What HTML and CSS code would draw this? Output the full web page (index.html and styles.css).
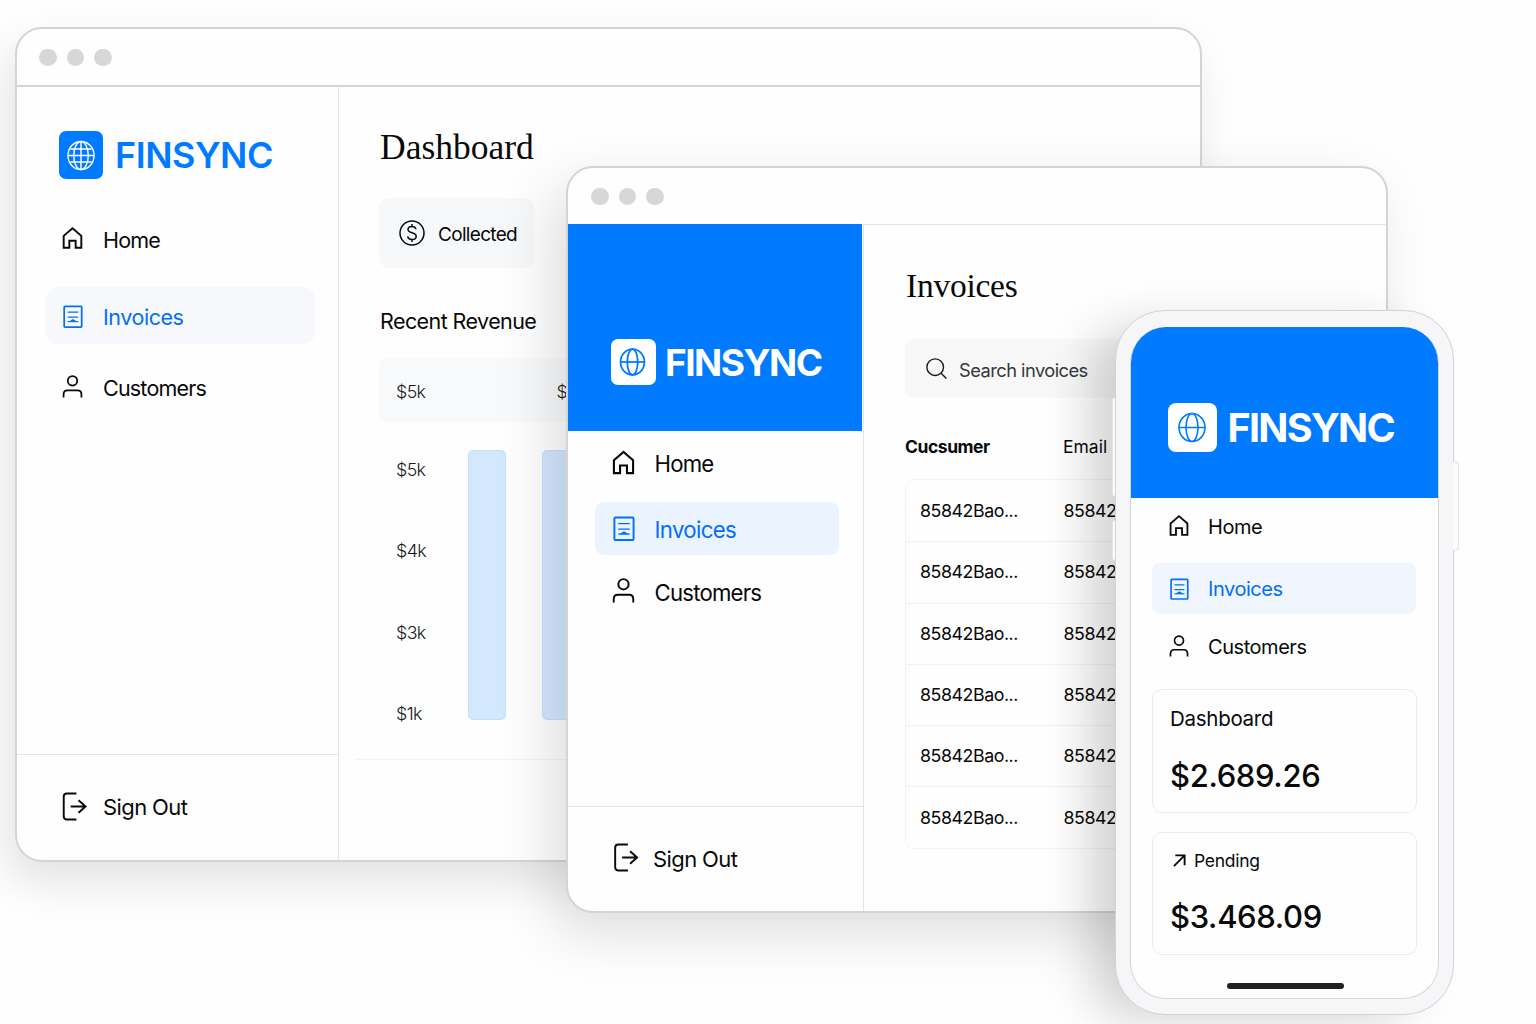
FILE: index.html
```html
<!DOCTYPE html>
<html lang="en">
<head>
<meta charset="utf-8">
<title>Finsync</title>
<link rel="stylesheet" href="styles.css">
</head>
<body>
<svg class="defs" aria-hidden="true">
  <symbol id="home" viewBox="0 0 24 24"><path d="M2.800 9.800 12 1.800l9.200 8v12.400h-5.900v-7.400H8.700v7.400H2.800z"/></symbol>
  <symbol id="invoice" viewBox="0 0 24 26"><rect x="2.500" y="1.500" width="20" height="23.500" rx="1"/><path class="thin" d="M6.500 8h12M6.500 13.700h12"/><path class="thin" d="M6.500 18.800h12"/><path class="solid" d="M7.500 19l5-3.200 5 3.200z"/></symbol>
  <symbol id="user" viewBox="0 0 24 26"><circle cx="12" cy="6.500" r="5.400"/><path d="M1.800 25.500v-3.400c0-2.800 1.700-4.600 4.400-4.600h11.600c2.700 0 4.400 1.800 4.400 4.600v3.400"/></symbol>
  <symbol id="out" viewBox="0 0 26 30"><path d="M15 1.500H5.200c-2 0-3.400 1.300-3.400 3.300v20.400c0 2 1.400 3.300 3.400 3.300H15M9 15h15.800M17.200 8.500l7.300 6.500-7.300 6.500"/></symbol>
</svg>

<section class="window desktop">
  <header class="titlebar"><i></i><i></i><i></i></header>
  <div class="body">
    <aside class="sidebar">
      <div class="brand">
        <span class="mark"><svg viewBox="0 0 30 32"><ellipse cx="15" cy="16" rx="14" ry="15"/><ellipse cx="15" cy="16" rx="7.800" ry="15"/><path d="M15 1v30M1 16h28M3.600 9h22.800M3.600 23h22.800"/></svg></span>
        <span class="name">FINSYNC</span>
      </div>
      <nav>
        <a class="item"><svg class="home"><use href="#home"/></svg><span>Home</span></a>
        <a class="item active"><svg class="inv"><use href="#invoice"/></svg><span>Invoices</span></a>
        <a class="item"><svg class="user"><use href="#user"/></svg><span>Customers</span></a>
      </nav>
      <a class="signout"><svg class="out"><use href="#out"/></svg><span>Sign Out</span></a>
    </aside>
    <main class="main">
      <h1>Dashboard</h1>
      <div class="collected"><svg viewBox="0 0 26 26"><circle cx="13" cy="13" r="12"/><path d="M17 9.200C16.600 7.400 15.200 6.400 13 6.400c-2.400 0-4 1.200-4 3.100 0 4.400 8.200 2 8.200 6.700 0 2.100-1.700 3.300-4.200 3.300-2.500 0-4-1.100-4.300-3.100M13 4v2.400M13 19.500V22"/></svg><span>Collected</span></div>
      <h2>Recent Revenue</h2>
      <div class="strip"><span>$5k</span><span>$4k</span></div>
      <div class="chart">
        <div class="axis"><span>$5k</span><span>$4k</span><span>$3k</span><span>$1k</span></div>
        <div class="bars"><b></b><b></b></div>
      </div>
      <hr>
    </main>
  </div>
</section>

<section class="window tablet">
  <header class="titlebar"><i></i><i></i><i></i></header>
  <div class="body">
    <aside class="sidebar">
      <div class="brand">
        <span class="mark"><svg viewBox="0 0 28 30"><ellipse cx="14" cy="15" rx="12.800" ry="13.800"/><ellipse cx="14" cy="15" rx="5.600" ry="13.800"/><path d="M1.200 15h25.600"/></svg></span>
        <span class="name">FINSYNC</span>
      </div>
      <nav>
        <a class="item"><svg class="home"><use href="#home"/></svg><span>Home</span></a>
        <a class="item active"><svg class="inv"><use href="#invoice"/></svg><span>Invoices</span></a>
        <a class="item"><svg class="user"><use href="#user"/></svg><span>Customers</span></a>
      </nav>
      <a class="signout"><svg class="out"><use href="#out"/></svg><span>Sign Out</span></a>
    </aside>
    <main class="main">
      <h1>Invoices</h1>
      <div class="search"><svg viewBox="0 0 24 24"><circle cx="10.500" cy="10.500" r="9.500"/><path d="m17.300 17.300 6 6"/></svg><span>Search invoices</span></div>
      <div class="thead"><strong>Cucsumer</strong><span>Email</span></div>
      <div class="rows">
        <div><span>85842Bao...</span><span>85842Bao...</span></div>
        <div><span>85842Bao...</span><span>85842Bao...</span></div>
        <div><span>85842Bao...</span><span>85842Bao...</span></div>
        <div><span>85842Bao...</span><span>85842Bao...</span></div>
        <div><span>85842Bao...</span><span>85842Bao...</span></div>
        <div><span>85842Bao...</span><span>85842Bao...</span></div>
      </div>
    </main>
  </div>
</section>

<section class="phone">
  <i class="key volume-up"></i><i class="key volume-down"></i><i class="key power"></i>
  <div class="screen">
    <div class="brand">
      <span class="mark"><svg viewBox="0 0 28 30"><ellipse cx="14" cy="15" rx="13" ry="14"/><ellipse cx="14" cy="15" rx="6" ry="14"/><path d="M1 15h26"/></svg></span>
      <span class="name">FINSYNC</span>
    </div>
    <nav>
      <a class="item"><svg class="home"><use href="#home"/></svg><span>Home</span></a>
      <a class="item active"><svg class="inv"><use href="#invoice"/></svg><span>Invoices</span></a>
      <a class="item"><svg class="user"><use href="#user"/></svg><span>Customers</span></a>
    </nav>
    <div class="card"><p class="label">Dashboard</p><p class="amount">$2.689.26</p></div>
    <div class="card pending"><p class="label"><svg viewBox="0 0 14 14"><path d="M1 13 12.500 1.500M2.500 1.500h10V12"/></svg>Pending</p><p class="amount">$3.468.09</p></div>
    <div class="grip"></div>
  </div>
</section>
</body>
</html>
```
FILE: styles.css
```css
* { box-sizing: border-box; margin: 0; padding: 0; }
body {
  position: relative;
  width: 1536px;
  height: 1024px;
  overflow: hidden;
  background: #fefefe;
  color: #08090a;
  font-family: Inter, "Liberation Sans", sans-serif;
}
.defs { position: absolute; width: 0; height: 0; }
svg { fill: none; stroke: currentColor; stroke-width: 2; flex: none; overflow: visible; }
.thin { stroke-width: 1.3; }
.solid { fill: currentColor; stroke: none; }

/* Window frames */
.window {
  position: absolute;
  display: flex;
  flex-direction: column;
  border: 2px solid #d3d4d5;
  background: #fefefe;
  overflow: hidden;
}
.desktop {
  left: 15px; top: 27px; width: 1187px; height: 835px;
  border-radius: 27px;
  box-shadow: -8px 20px 44px rgba(0, 0, 0, .11);
}
.tablet {
  left: 566px; top: 166px; width: 822px; height: 747px;
  border-radius: 27px;
  box-shadow: -14px 20px 56px rgba(0, 0, 0, .13);
}
.titlebar { display: flex; align-items: center; gap: 10px; flex: none; padding-top: 1px; }
.titlebar i { width: 17.500px; height: 17.500px; border-radius: 50%; background: #d7d7d7; }
.desktop .titlebar { height: 58px; padding-left: 22px; border-bottom: 2px solid #d3d4d5; }
.tablet .titlebar { height: 56px; padding-left: 23px; }
.body { display: flex; flex: 1; min-height: 0; }
.sidebar { display: flex; flex-direction: column; flex: none; border-right: 1px solid #e3e4e5; }
.desktop .sidebar { width: 322px; }
.tablet .sidebar { width: 296px; }

/* Brand */
.brand { display: flex; align-items: center; flex: none; }
.mark { display: flex; align-items: center; justify-content: center; flex: none; }
.name { white-space: nowrap; line-height: 1; }
.desktop .brand { height: 48px; margin: 44px 0 0 42px; gap: 12px; color: #007bff; }
.desktop .mark { width: 44px; height: 48px; border-radius: 7px; background: #007bff; color: #fff; }
.desktop .mark svg { width: 28px; height: 31px; stroke-width: 1.500; }
.desktop .name { font-size: 36px; font-weight: 600; letter-spacing: -.5px; }
.tablet .brand { width: 294px; height: 206.500px; padding: 70px 0 0 43px; gap: 9px; background: #007bff; color: #fff; }
.tablet .mark { width: 45px; height: 46px; padding-right: 2px; border-radius: 7px; background: #fff; color: #007bff; }
.tablet .mark svg { width: 27px; height: 28px; stroke-width: 1.900; }
.tablet .name { font-size: 37px; font-weight: 700; letter-spacing: -1.500px; }

/* Navigation */
nav { display: flex; flex-direction: column; }
.item, .signout { display: flex; align-items: center; white-space: nowrap; }
.item span { padding-top: 2px; }
.active { color: #036ef8; }
.desktop nav { margin: 31.500px 23px 0 29px; }
.desktop .item { height: 57px; padding-left: 16px; gap: 20px; font-size: 21.500px; letter-spacing: -.800px; border-radius: 12px; }
.desktop .item svg { width: 21px; height: 23px; margin-bottom: 2px; }
.desktop .item .home { width: 23px; height: 24px; margin: 0 -1px 3px -1px; }
.desktop .active { margin: 19px 0 15px; padding-top: 2px; background: #f6f8fb; letter-spacing: -.450px; }
.desktop .active svg { margin-bottom: 0; }
.signout { margin-top: auto; border-top: 1px solid #e5e6e7; font-size: 22px; letter-spacing: -.600px; }
.out { width: 25px; height: 29px; }
.desktop .signout { height: 106px; padding: 0 0 2px 45px; gap: 16px; }
.tablet nav { margin: 6px 24.500px 0 26.500px; }
.tablet .item { height: 53px; padding-left: 17px; gap: 20px; font-size: 22.200px; letter-spacing: -.800px; border-radius: 9px; }
.tablet .item svg { width: 23px; height: 25px; margin-bottom: 1px; }
.tablet .item .home { width: 25px; height: 27px; margin: 0 -1px 2px -1px; }
.tablet .item:first-child span { padding-top: 0; }
.tablet .active { margin: 12px 0 10px; padding-top: 1px; background: #ebf3fe; letter-spacing: -.650px; }
.tablet .signout { height: 105px; padding-left: 45px; gap: 14px; }
.tablet .out { width: 26px; margin-bottom: 4px; }

/* Dashboard window */
.main { display: flex; flex-direction: column; flex: 1; min-width: 0; }
h1 { font: 400 35.500px/40px "Liberation Serif", serif; padding-left: 1px; }
h2 { padding-left: 1px; font-size: 21.500px; font-weight: 400; line-height: 26px; letter-spacing: -.580px; }
.desktop .main { padding: 40px 0 0 40px; }
.collected {
  display: flex; align-items: center; gap: 13px;
  width: 155px; height: 70px; margin-top: 31px; padding-left: 20px;
  border-radius: 10px; background: #f7f8f9;
  font-size: 19px; letter-spacing: -.680px;
}
.collected svg { width: 26px; height: 26px; stroke-width: 1.500; }
.collected span { padding-top: 3px; }
.desktop h2 { margin-top: 40px; }
.strip {
  display: flex; align-items: center; gap: 131px;
  height: 64px; margin-top: 24px; padding: 3px 0 0 17px;
  border-radius: 8px 0 0 8px; background: #f8f9fa;
}
.strip, .axis { font-size: 17.800px; font-weight: 300; letter-spacing: -.600px; color: #18191b; }
.chart { display: flex; padding: 27.500px 0 0 17px; }
.axis { display: flex; flex-direction: column; justify-content: space-between; width: 72px; height: 276.500px; padding-top: 8px; line-height: 24px; }
.bars { display: flex; gap: 36px; }
.bars b { width: 37.500px; height: 270px; border: 1px solid #c5dffb; border-radius: 5px; background: #d3e7fd; }
hr { margin-top: 33px; margin-left: -24px; border: 0; border-top: 1px solid #f3f3f4; }

/* Invoices window */
.tablet .main { padding: 41px 0 0 41px; border-top: 1px solid #e5e6e7; }
.tablet h1 { font-size: 33.500px; letter-spacing: -.250px; }
.search {
  display: flex; align-items: center; gap: 12px;
  height: 59px; margin-top: 33px; padding-left: 21px;
  border-radius: 8px; background: #f8f8f9;
  font-size: 18.300px; letter-spacing: -.540px; color: #35373a;
}
.search svg { width: 21px; height: 21px; color: #191b1d; stroke-width: 1.600; }
.search span { padding-top: 2px; }
.thead { display: flex; align-items: center; height: 81px; padding-top: 16px; font-size: 17.500px; }
.thead strong { width: 158px; font-weight: 700; letter-spacing: -.450px; }
.rows { border: 1px solid #f1f2f3; border-right: 0; border-radius: 9px 0 0 9px; }
.rows div { display: flex; align-items: center; height: 61.300px; padding: 0 0 1px 14px; font-size: 17.800px; letter-spacing: -.440px; }
.rows div + div { border-top: 1px solid #f1f2f3; }
.rows span:first-child { width: 143.500px; }

/* Phone */
.phone {
  position: absolute; left: 1115px; top: 310px; width: 339px; height: 705px;
  padding: 16px 14px;
  border: 1.500px solid #d2d3d5; border-radius: 50px; background: #f6f6f8;
  box-shadow: -32px 10px 48px -8px rgba(0, 0, 0, .18);
}
.key { position: absolute; border: 1px solid #e2e3e5; background: #fbfbfc; }
.volume-up, .volume-down { left: -4px; width: 3px; border-right: 0; border-radius: 3px 0 0 3px; }
.volume-up { top: 86px; height: 100px; }
.volume-down { top: 209px; height: 41px; }
.power { right: -6px; top: 150px; width: 6px; height: 90px; border-left: 0; border-radius: 0 4px 4px 0; }
.screen {
  display: flex; flex-direction: column; height: 672px; overflow: hidden;
  border: 1px solid #d5d6d8; border-top: 0; border-radius: 36px; background: #fefefe;
}
.phone .brand { height: 171px; margin: 0 -1px; padding: 30px 0 0 38px; gap: 11px; background: #007bff; color: #fff; }
.phone .mark { width: 48.500px; height: 49px; border-radius: 8px; background: #fff; color: #007bff; }
.phone .mark svg { width: 28px; height: 31px; stroke-width: 1.600; }
.phone .name { padding-top: 2px; font-size: 39.500px; font-weight: 700; letter-spacing: -1.700px; }
.phone nav { margin: 3px 22px 0 21px; }
.phone .item { height: 51px; padding: 0 0 2px 17px; gap: 19px; font-size: 20px; letter-spacing: -.450px; border-radius: 8px; }
.phone .item svg { width: 20px; height: 22px; }
.phone .item .home { width: 22px; height: 23px; margin: 0 -1px 1px -1px; }
.phone .active { margin: 11px 0 7px; padding: 0 0 0 17px; background: #f0f5fe; }
.phone .active span { padding-top: 0; }
.card { height: 124px; margin: 17px 21px 0; padding: 15px 0 0 17px; border: 1px solid #ebebed; border-radius: 10px; }
.card + .card { height: 123px; margin-top: 18.500px; padding-top: 14px; }
.label { display: flex; align-items: center; height: 26px; font-size: 20.500px; letter-spacing: -.280px; }
.pending .label { padding: 2px 0 0 3px; font-size: 17.500px; gap: 8px; }
.label svg { width: 13px; height: 13px; }
.amount { margin-top: 24.500px; font-size: 31px; font-weight: 500; line-height: 40px; letter-spacing: -.350px; }
.grip { width: 117px; height: 5.500px; margin: 28.500px 0 0 96px; border-radius: 3px; background: #202124; }
```
